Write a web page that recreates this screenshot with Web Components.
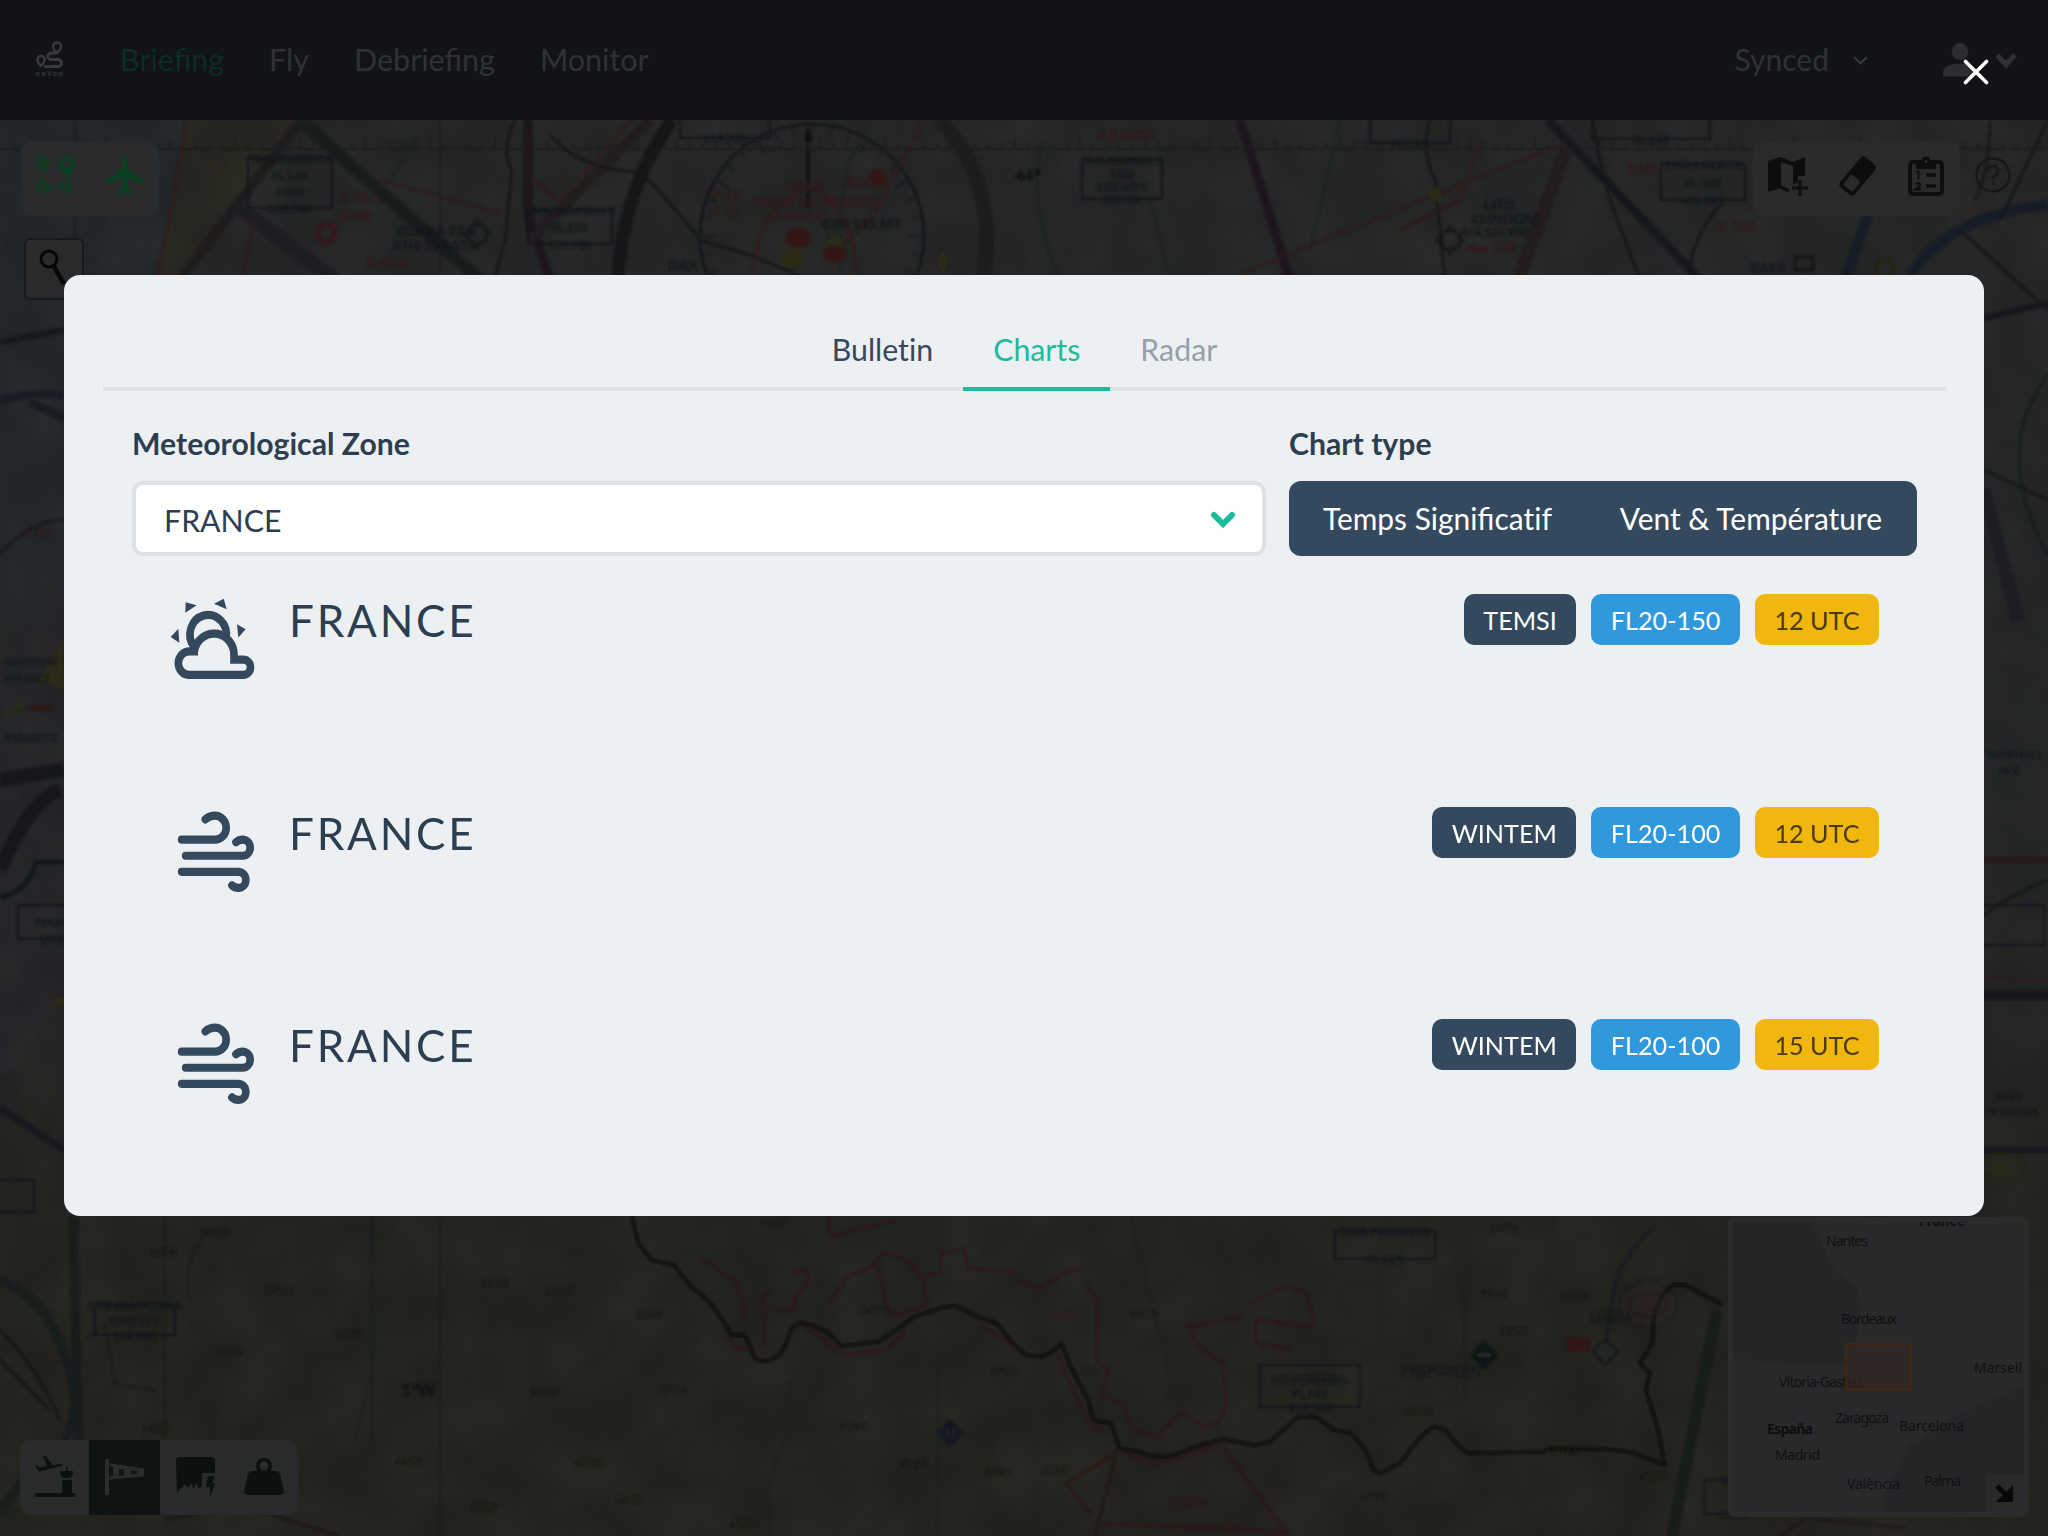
<!DOCTYPE html>
<html lang="en">
<head>
<meta charset="utf-8">
<title>Weather charts</title>
<style>
html,body{margin:0;height:100%;overflow:hidden;background:#111316}
body{font-family:Lato,"Liberation Sans",sans-serif;font-size:30px;color:#34495e}
</style>
</head>
<body>
<flight-app></flight-app>
<script>
const define=(name,html)=>customElements.define(name,class extends HTMLElement{
  constructor(){super();this.attachShadow({mode:'open'}).innerHTML=html;}
});

/* Glyph library: [viewBox, markup] */
const ICONS={
 logo:['0 0 28 28','<g fill="none" stroke="#393a3d" stroke-width="2.4"><path d="M21 1.500a4 4 0 0 0-4 4c0 3 4 6.500 4 6.500s4-3.500 4-6.500a4 4 0 0 0-4-4z"/><path d="M5 15a3.600 3.600 0 0 0-3.600 3.600c0 3 3.600 6.400 3.600 6.400s3.600-3.400 3.600-6.400A3.600 3.600 0 0 0 5 15z"/><path d="M20 12h-5a3 3 0 0 0 0 6.500h7a3.500 3.500 0 0 1 0 7H8" stroke-width="2.800"/></g>'],
 chev:['0 0 24 16','<path d="M3 3l9 9 9-9" fill="none" stroke="currentColor" stroke-width="5"/>'],
 selchev:['0 0 26 18','<path d="M4 4l9 9 9-9" fill="none" stroke="#1abc9c" stroke-width="6" stroke-linecap="round" stroke-linejoin="miter"/>'],
 thin:['0 0 14 9','<path d="M1 1.200l6 6 6-6" fill="none" stroke="#36383b" stroke-width="2"/>'],
 user:['0 0 34 34','<g fill="#2c2d30"><ellipse cx="17" cy="8.500" rx="8.200" ry="8.500"/><path d="M0 33.500v-4c0-6 9-9 17-9s17 3 17 9v4z"/></g>'],
 close:['0 0 26 26','<path d="M2.500 2.500l21 21M23.500 2.500l-21 21" stroke="#fff" stroke-width="3.600" stroke-linecap="round"/>'],
 route:['0 0 38 38','<g fill="#0a3f22"><path fill-rule="evenodd" d="M6 1a5.800 5.800 0 0 0-5.800 5.800C.2 11 6 16 6 16s5.800-5 5.800-9.200A5.800 5.800 0 0 0 6 1zm0 3.300a2.600 2.600 0 1 1 0 5.200 2.600 2.600 0 0 1 0-5.200zM30 0a8 8 0 0 0-8 8c0 6 8 14.500 8 14.500S38 14 38 8a8 8 0 0 0-8-8zm0 4.500a3.300 3.300 0 1 1 0 6.600 3.300 3.300 0 0 1 0-6.600z"/><rect x="4.700" y="18" width="2.600" height="2.800"/></g><g fill="none" stroke="#0a3f22"><circle cx="6" cy="31" r="4.500" stroke-width="3.400"/><circle cx="30" cy="31" r="4.500" stroke-width="3.400"/><path d="M14 31h10" stroke-width="2.600" stroke-dasharray="3 4"/></g>'],
 plane:['0 0 38 40','<path fill="#0a3f22" d="M19 0c-2.200 2-2.800 5-2.800 8v6L0 25.500v3.200l16.200-4.500v8.300L12 36.500v2.800l7-1.500 7 1.500v-2.800l-4.200-4v-8.300L38 28.700v-3.200L21.800 14V8c0-3-.6-6-2.800-8z"/>'],
 search:['0 0 34 42','<circle cx="12" cy="11" r="8" fill="none" stroke="#070707" stroke-width="3"/><path d="M16.500 18L27 36" stroke="#070707" stroke-width="4.500"/>'],
 map:['0 0 42 40','<g fill="#0c0e0e"><path d="M1 5l13-4v31L1 36z"/><path d="M14 1l12 5v4l-12-4z"/><path d="M26 6l12-5v19h-7v6l-5 3z"/></g><path d="M14 31l8 4" fill="none" stroke="#0c0e0e" stroke-width="3.500"/><path d="M33 24v16M25 32h16" stroke="#0c0e0e" stroke-width="3"/>'],
 eraser:['0 0 42 40','<g transform="rotate(40 21 20)"><rect x="12" y="0" width="19" height="39" rx="4" fill="#0c0e0e"/><rect x="15.500" y="22" width="12" height="13.500" rx="2.500" fill="#2a2a2b"/></g>'],
 clip:['0 0 38 42','<rect x="3" y="7" width="32" height="32" rx="3" fill="none" stroke="#0c0e0e" stroke-width="4"/><path d="M9 14V6h5.500a4.500 4.500 0 0 1 9 0H29v8z" fill="#0c0e0e"/><circle cx="19" cy="6.500" r="1.500" fill="#2a2a2b"/><path d="M19 20h10M19 31h10" stroke="#0c0e0e" stroke-width="3.500"/><path d="M9 17.500l2.500-1v8M8.500 29.500q3-2.500 4.500 0 0 2-4.500 5H14" fill="none" stroke="#0c0e0e" stroke-width="2"/>'],
 help:['0 0 38 38','<circle cx="19" cy="19" r="16.500" fill="none" stroke="#171717" stroke-width="2.400"/><path d="M14 15q0-5 5-5t5 4.500-5 6v3M19 26v3" fill="none" stroke="#171717" stroke-width="2.400"/>'],
 tower:['0 0 40 42','<g fill="#0d1010"><path d="M8 0l3 .5 7 9 8-2c2 0 2 2 0 2.800L4 15.500 0 10l2-.5 3 2 7-1.500z"/><path d="M25 15h6v-4h1.500v4H38v3l-2.500 4h-8L25 18z"/><rect x="27" y="24" width="10" height="13"/><rect x="0" y="37" width="40" height="4"/></g>'],
 sock:['0 0 40 38','<path d="M2 1v36" stroke="#2b2c2d" stroke-width="4"/><path fill="#2b2c2d" fill-rule="evenodd" d="M5 5l4 1 30 4.500v8L9 21l-4 1v-3l3-1V9L5 8zm9 6v7l5-1v-5zm12 1.500v4l6-1v-2.500z"/>'],
 radar:['0 0 40 42','<path fill="#0d1010" d="M1 5q0-4 4-4h31q4 0 4 4v12H27v12l-3 4-3-6-2 6-3-6-3 5-3-4-8 9z"/><path fill="#0d1010" d="M33 20h7l-3 7h3l-5 15v-11h-4z"/>'],
 weight:['0 0 40 38','<path fill="#0d1010" d="M9 13h22q4 0 5 3l4 17q0 4-4 4H4q-4 0-4-4l4-17q1-3 5-3z"/><ellipse cx="20" cy="8" rx="6.300" ry="6.500" fill="none" stroke="#0d1010" stroke-width="3.600"/>'],
 cloud:['210 75 255 235','<g fill="none" stroke="#34495e" stroke-width="23"><path d="M282 214A54.500 54.500 0 1 1 378 190"/><path fill="#edf0f3" d="M294 227H268a33 33 0 0 0 0 66H430a21.500 21.500 0 0 0 0-43H402V241A60 60 0 0 0 283 227"/></g><g fill="#34495e"><path d="M257 90l33 8-34 21zM342 94l29-14 9 29zM411 151l26 14-22 23zM212 187l23-23 3 39z"/></g>'],
 wind:['210 670 255 235','<g fill="none" stroke="#34495e" stroke-width="23" stroke-linecap="round"><path d="M245 753H345a33.500 33.500 0 0 0 0-67Q328 686 316 696"/><path d="M257 798H428a22.500 22.500 0 0 0 0-45Q417 753 408 760"/><path d="M245 843H415a22.500 22.500 0 0 1 0 45Q404 888 396 881"/></g>']
};
customElements.define('ui-icon',class extends HTMLElement{
  constructor(){super();this.attachShadow({mode:'open'});}
  connectedCallback(){
    const [vb,m]=ICONS[this.getAttribute('name')];
    this.shadowRoot.innerHTML=`<style>:host{display:block;flex:none;width:${this.getAttribute('w')}px;height:${this.getAttribute('h')}px}svg{display:block;width:100%;height:100%}</style><svg viewBox="${vb}" preserveAspectRatio="none">${m}</svg>`;
  }
});

define('app-header',`<style>
:host{display:flex;align-items:center;height:120px;box-sizing:border-box;padding:0 30px 0 34px;background:#111316;color:#303134;flex:none}
span{position:relative;top:-1px}
.logo{display:flex;flex-direction:column;align-items:center;width:32px;margin-right:54px;padding-bottom:3px}
.logo small{font:bold 7px/7px "Liberation Sans",sans-serif;letter-spacing:1.6px;color:#38393c;margin-top:1px}
nav{display:flex;gap:45px;flex:1;font-size:30.500px}
.on{color:#0b2c28}
.sync{display:flex;align-items:center;gap:24px;margin-right:75px}
.me{display:flex;align-items:center;gap:17px}
</style>
<div class="logo"><ui-icon name="logo" w="28" h="28"></ui-icon><small>naVoo</small></div>
<nav><span class="on">Briefing</span><span>Fly</span><span>Debriefing</span><span>Monitor</span></nav>
<div class="sync"><span>Synced</span><ui-icon name="thin" w="15" h="9"></ui-icon></div>
<div class="me"><ui-icon name="user" w="34" h="34"></ui-icon><ui-icon name="chev" w="24" h="17"></ui-icon></div>`);

define('tool-bar',`<style>
:host{display:flex;border-radius:11px;background:#292a2b;overflow:hidden;height:75px}
</style><slot></slot>`);
define('tool-cell',`<style>
:host{display:flex;align-items:center;justify-content:center;box-sizing:border-box;width:69px;height:75px;padding-bottom:var(--lift,0px)}
:host([active]){background:#101313;width:71px}
</style><slot></slot>`);

/* Aeronautical chart */
const frame=(x,y,w,h,lines,c='#12181b')=>`<rect x="${x}" y="${y}" width="${w}" height="${h}" fill="none" stroke="${c}" stroke-width="2"/>`+lines.map((t,i)=>t?`<text x="${x+w/2}" y="${y+5+i*h/(lines.length-1||1)}" text-anchor="middle" font-size="${Math.min(12,h/(lines.length-1||1)-2.5)}" fill="${c}">${t}</text>`:'').join('');
let ticks='';for(let x=14;x<2048;x+=13)ticks+=`M${x} ${x%5?143:138}V149`;
let rose='';for(let i=0;i<36;i++){const a=i*Math.PI/18,r=i%3?102:95;rose+=`M${812+110*Math.sin(a)} ${236-112*Math.cos(a)}L${812+r*Math.sin(a)} ${236-r*Math.cos(a)}`;}
const spots=[[150,1256,3670],[200,1236,2810],[265,1294,1480],[480,1288,1178],[545,1296,2117],[335,1338,2287],[215,1356,1382],[635,1318,2021],[530,1396,1993],[660,1394,2701],[142,1432,1480],[395,1465,4407],[575,1466,4186],[470,1512,2907],[615,1504,2400],[760,1226,2047],[860,1314,9478],[990,1375,7700],[1130,1318,8907],[840,1430,3041],[900,1468,5057],[985,1476,3841],[1040,1474,6280],[1360,1500,2751],[1490,1232,6473],[1480,1298,7102],[1560,1300,1913],[1500,1335,5502],[1405,1415,2106],[1550,1455,3014],[1640,1480,4090],[1070,1375,7000],[730,1528,4000]].map(([x,y,t])=>`<text x="${x}" y="${y}">${t}</text>`).join('');
define('chart-map',`<style>:host{display:block;position:absolute;inset:0}svg{display:block}</style>
<svg width="2048" height="1416" viewBox="0 120 2048 1416" font-family="Lato,sans-serif" font-size="14" font-weight="bold">
<defs>
<linearGradient id="g" x1="0" y1="0" x2="0" y2="1"><stop offset="0" stop-color="#232424"/><stop offset=".5" stop-color="#222425"/><stop offset=".78" stop-color="#21211e"/><stop offset="1" stop-color="#22211c"/></linearGradient>
<filter id="b" x="0" y="0" width="1" height="1"><feGaussianBlur stdDeviation=".8"/></filter>
<filter id="soft" x="-.5" y="-.5" width="2" height="2"><feGaussianBlur stdDeviation="7"/></filter>
<filter id="n" x="0" y="0" width="1" height="1"><feTurbulence type="fractalNoise" baseFrequency=".018" numOctaves="4" seed="4"/><feColorMatrix values="0 0 0 0 .06  0 0 0 0 .065  0 0 0 0 .05  1.1 0 0 0 -.33"/></filter>
</defs>
<rect y="120" width="2048" height="1416" fill="url(#g)"/>
<path d="M0 120H187L158 280 64 620H0z" fill="#202528"/>
<path d="M0 680L64 550V1000L0 1080z" fill="#222326"/>
<path d="M187 120H300L180 280H158z" fill="#26241e"/>
<rect y="120" width="2048" height="1416" filter="url(#n)" opacity=".3"/>
<g fill="none" filter="url(#b)">
 <path d="${ticks}M0 149H2048" stroke="#1b1c1c" stroke-width="1.500"/>
 <path d="M440 120V280M440 1216V1536M75 120V280M372 1216V1440M165 1216V1441" stroke="#1a1b1a" stroke-width="1.500"/>
 <!-- airspace bands -->
 <g stroke-width="9" stroke="#191a1e">
  <path d="M300 122L180 280" stroke="#1f1a1d"/><path d="M302 122L480 280" stroke-width="12"/><path d="M235 205L335 280" stroke-width="14" stroke="#1b1e23"/>
  <path d="M528 120V215L550 280" stroke="#1b191b"/><path d="M650 120L530 240" stroke="#211a1c"/><path d="M672 120Q622 190 618 280" stroke-width="13" stroke="#151819"/>
  <path d="M940 120Q1000 185 983 280" stroke-width="14" stroke="#1b1b1e"/><path d="M1240 120L1290 280" stroke-width="9" stroke="#1b181b"/>
  <path d="M1566 150L1518 280" stroke="#211a1e" stroke-width="12"/><path d="M1548 120L1700 280" stroke="#13191b" stroke-width="8"/>
  <path d="M1868 215L1845 280M1910 275Q1950 215 2048 205" stroke="#171b25" stroke-width="10"/>
  <path d="M0 342L64 330M1984 318L2048 303" stroke="#17181d" stroke-width="6"/>
  <path d="M0 400Q30 392 64 395M30 402L64 418" stroke="#151a22" stroke-width="7"/>
  <path d="M0 780L64 770M0 870Q30 800 60 790" stroke="#17191f" stroke-width="14"/><path d="M0 898Q30 890 36 862H64" stroke="#101317" stroke-width="4"/>
  <path d="M0 1108L64 1150M1984 1150H2048" stroke="#14171b" stroke-width="6"/>
  <path d="M1984 490L2018 620" stroke="#1a1b24" stroke-width="12"/><path d="M1984 860H2048" stroke="#251319" stroke-width="5"/><path d="M1984 995H2048" stroke="#13151c" stroke-width="9"/>
  <path d="M74 1216Q75 1330 78 1441" stroke="#151a1d" stroke-width="9"/><path d="M0 1281Q60 1300 75 1400Q70 1440 62 1440M0 1510L24 1480" stroke="#141a1d" stroke-width="8"/>
  <path d="M1717 1310L1672 1536" stroke="#161b18" stroke-width="11"/>
 </g>
 <!-- ranges and compass rose -->
 <circle cx="812" cy="236" r="112" stroke="#15191a" stroke-width="2.500"/><path d="${rose}" stroke="#181b1c" stroke-width="1.600"/>
 <path d="M808 127v82" stroke="#161818" stroke-width="3"/><path d="M808 127l4 14h-8z" fill="#111"/>
 <path d="M752 280Q754 210 808 187Q858 210 855 280" stroke="#311a1c" stroke-width="2.500"/>
 <path d="M0 555Q30 520 64 520M2048 375Q1990 450 2048 555" stroke="#171a1b" stroke-width="2"/>
 <!-- red tracks -->
 <g stroke="#301a1c" stroke-width="2.200"><path d="M380 180L500 213M630 120L560 201 530 178M925 120L900 165 870 220 830 255M1380 217L1565 143M1240 274L1380 217M186 120Q176 190 156 280M254 220L242 280M1480 140l-20 60-60 30M1984 978l64 3"/></g>
 <!-- roads and rivers -->
 <g stroke="#141616" stroke-width="2.200"><path d="M515 120Q500 150 512 170L505 240 494 280M550 135Q580 170 640 172Q670 200 700 240L750 255 810 280M1430 120Q1420 150 1435 180L1445 280M1593 120Q1600 170 1612 205L1640 280M1720 205Q1690 240 1690 275M1990 120Q1990 170 1975 200M1960 230L2048 310M2048 120L2000 220M0 1330Q40 1370 60 1420M0 1360L50 1410M1984 470L2048 500M1984 915Q2010 895 2048 880"/></g>
 <g stroke="#1c2021" stroke-width="2"><path d="M418 135L390 180M860 140Q835 180 840 280M1040 150Q1030 210 1060 280M1150 200L1170 280M1340 120L1310 250M1130 1216Q1150 1300 1165 1350T1165 1400M375 1216Q370 1300 372 1370L355 1440M790 1380V1425L766 1490 772 1536M937 1350L938 1536M1465 1285V1400"/></g>
 <!-- frontier -->
 <g transform="translate(700 1200) scale(.4464 .3333)">
 <path vector-effect="non-scaling-stroke" stroke="#0c0d0c" stroke-width="3.200" stroke-linejoin="round" d="M-153 48L-138 130-108 180-58 195-20 260 0 280 30 320 60 380 70 405H100L125 480 150 485 175 468 190 440 205 385 225 368 250 375 285 395 315 438 400 425 440 390 480 350 550 320 575 318 630 355 665 370 700 430 730 465 765 470 790 455 810 430 830 500 870 600 880 660 920 670 940 745 980 755 1010 768H1060L1110 740 1170 718 1240 735 1275 728 1340 650H1380L1420 690 1460 700 1490 750 1510 810 1525 820 1568 790"/>
 <path vector-effect="non-scaling-stroke" stroke="#2d1618" stroke-width="2" stroke-linejoin="round" d="M0 185l30 5 20 35 25 10 20 70M60 410l20 35 30 0M145 440l-5-150 15-15M165 335l40-5 10-40 30-50-10-30-30 10M230 375l60 55 30 35 100-15 40-60M290 310l40-80 60-35 20-40 60 30 30 60 10 70-60 30-30-10-20-140M500 230l40-10 0-60 50-15 10 60 100 10M700 235l60 30 60-50 40-10M865 250l25 60v180l25 10-15 85 50 25 15 80 55 20 60-70 50 40 30-10 20-60-10-120-60-60-15-60M1090 380l130-30M1230 310l80-50 50 20 15 100-130-20 0 70 80 20M630 375l80 70M800 460l50 150 30 75 40 10M940 755l80 35 50-15 90-40M1170 740l150 270M890 970l420 25M930 760l-110 90 60 100M290 50v60l150-50M100 310v50"/></g>
 <path transform="translate(1400 1200) scale(.4133 .3333)" vector-effect="non-scaling-stroke" stroke="#0c0d0c" stroke-width="3.200" stroke-linejoin="round" d="M0 790L50 710 80 680 110 690 135 730 165 760 350 755 360 745 500 747 560 757 640 795 625 690 610 630 595 570 605 520 580 490 610 430 615 340 635 285 660 255 690 255 780 315"/>
 <path d="M1117 1449L1095 1536M165 1520L240 1505 340 1536M1780 1536l26-18 100 10" stroke="#1c1919" stroke-width="2"/>
 <path d="M1655 1227Q1620 1255 1613 1295L1605 1350" stroke="#171b20" stroke-width="3"/>
 <path d="M210 1230Q180 1260 190 1300M85 1340l20-15 10 60 40 5" stroke="#1b1c1b" stroke-width="1.500"/>
</g>
<g filter="url(#b)">
 <g fill="#2b2b14"><circle cx="1435" cy="195" r="7"/><path d="M943 250l6 12-6 11-7-11z"/><ellipse cx="792" cy="259" rx="11" ry="10"/><ellipse cx="835" cy="245" rx="9" ry="10"/><path d="M40 680L60 645H64V690z"/><path d="M0 714L22 700 24 708z"/><circle cx="60" cy="1002" r="5"/></g>
 <ellipse cx="2000" cy="1168" rx="16" ry="8" fill="#2b2b14" filter="url(#soft)"/>
 <g fill="#331517"><ellipse cx="798" cy="238" rx="13" ry="10"/><ellipse cx="835" cy="254" rx="12" ry="8"/><circle cx="878" cy="178" r="9"/><ellipse cx="40" cy="708" rx="13" ry="3"/></g>
 <circle cx="326" cy="233" r="9" fill="none" stroke="#35191b" stroke-width="5"/>
 <g fill="none" stroke="#151719" stroke-width="2.500"><circle cx="477" cy="234" r="10"/><path d="M477 219v5M477 244v5M462 234h5M487 234h5"/><circle cx="1450" cy="240" r="10"/><path d="M1450 225v5M1450 250v5M1435 240h5M1460 240h5"/><circle cx="1884" cy="268" r="9" stroke="#25230f"/><rect x="1795" y="257" width="18" height="13"/></g>
 <path d="M950 1419l13 14-13 14-13-14z" fill="#131922"/><text x="945" y="1438" fill="#24262a">H</text>
 <path d="M1484 1340l14 15-14 15-14-15z" fill="#101615"/><path d="M1477 1355h14" stroke="#2a2a26" stroke-width="3"/>
 <path d="M1605 1340l12 11-12 14-12-14z" fill="#232620" stroke="#15181b" stroke-width="2"/><path d="M1568 1338h22v13h-24z" fill="#311617"/>
 <ellipse cx="1648" cy="1305" rx="24" ry="16" fill="#2b1f1c" opacity=".6" filter="url(#soft)"/>
 <g fill="#331a1c"><text x="785" y="190">LFBM</text><text x="754" y="207" font-size="13.500">MONT DE MARSAN</text><text x="762" y="220" font-size="11">119.700 ATIS</text><text x="846" y="188">R31</text><text x="340" y="202">R 48 A</text><text x="338" y="221">2000</text><text x="366" y="268">R 48 B</text><text x="1098" y="139">4.2 ASFC</text><text x="712" y="200">P 26</text><text x="708" y="216">D 32</text><text x="1628" y="174">R191</text><text x="1715" y="231">▼ 104</text><text x="1467" y="252">◂▬ 130</text><text x="1170" y="1508">R 970</text><text x="24" y="537" font-size="11">R 10B</text><text x="1050" y="1320" font-size="12">R 81</text></g>
 <g fill="#13181c"><text x="1015" y="181" font-size="16" fill="#101112">44°</text><text x="401" y="1396" font-size="17" fill="#101112">1°W</text><text x="396" y="236">BORDA 23.8</text><text x="392" y="250">ATIS 120.575</text><text x="668" y="270">DAX</text><text x="1484" y="210">LFID</text><text x="1472" y="224" font-size="14">CONDOM</text><text x="1460" y="236" font-size="12">A/A 123.500</text><text x="1750" y="273">BASA</text><text x="822" y="229">CTR 111 MT</text><text x="1401" y="1376">PERPIGNAN</text><text x="1590" y="1322">LLIVIA</text><text x="4" y="665" font-size="10">AQUITAINE</text><text x="4" y="682" font-size="10">A/A 122.3</text><text x="4" y="742" font-size="12">BIARRITZ</text><text x="1987" y="758" font-size="9">TOULOUSE 7</text><text x="1998" y="774" font-size="10">AFIS</text><text x="1996" y="1100" font-size="10">LFCG</text><text x="1986" y="1116" font-size="10">ST GIRONS</text></g>
 ${frame(248,158,84,50,['TMA BIARRITZ','FL 145','2500','119.700'])}
 ${frame(528,210,84,34,['TMA MARSAN 3','FL 105','119.700'])}
 ${frame(1082,160,80,39,['TMA MARSAN 5','3000','2000 ASFC','119.700'])}
 ${frame(1661,164,84,36,['TMA CAZAUX','FL 065','+FL 195'])}
 ${frame(1592,108,118,31,['','FL 145'])}${frame(1370,108,80,35,['','FL 115'])}${frame(680,108,90,30,['','119.700'])}
 ${frame(95,1305,80,30,['CTR PAMPLONA','7000 SFC','118.200'])}
 ${frame(1260,1365,100,42,['','SIV PYRENEES','FL 145','118.700'])}
 ${frame(1335,1231,100,28,['TMA PYRENEES','FL 115'])}
 ${frame(18,905,70,34,['','MNPS','1000'])}${frame(-10,1180,44,32,['',''])}
 ${frame(1940,905,105,40,['',''])}
 ${frame(1704,1480,60,34,['TMA','118.1'])}
 <g fill="#181815" font-size="12" font-style="italic" opacity=".8">${spots}</g>
</g>
</svg>`);

define('mini-map',`<style>
:host{display:block;box-sizing:border-box;width:301px;height:300px;border:5px solid #2b2b2c;border-radius:6px;background:#29292b;overflow:hidden}
svg{display:block}</style>
<svg width="291" height="290" viewBox="1733 1221 291 290" font-family="'Noto Sans',sans-serif" font-size="14" fill="#101011">
<path d="M1733 1221h79l22 48 22 15 5 25-10 55-55 0-63-7z" fill="#252528"/>
<path d="M2024 1385l-60 25-55 35-25 50v16h140z" fill="#252528"/>
<text x="1919" y="1225" textLength="46" font-weight="bold">France</text>
<text x="1826" y="1245" textLength="42">Nantes</text>
<text x="1841" y="1323" textLength="56">Bordeaux</text>
<text x="1974" y="1372" textLength="48">Marseil</text>
<text x="1779" y="1386" textLength="84">Vitoria-Gasteiz</text>
<text x="1835" y="1422" textLength="54">Zaragoza</text>
<text x="1767" y="1433" textLength="46" font-weight="bold" fill="#0c0c0d">España</text>
<text x="1899" y="1430" textLength="65">Barcelona</text>
<text x="1775" y="1459" textLength="45">Madrid</text>
<text x="1847" y="1488" textLength="53">València</text>
<text x="1924" y="1485" textLength="37">Palma</text>
<rect x="1846" y="1343" width="65" height="45.500" fill="#322525" fill-opacity=".75" stroke="#45290c" stroke-width="1.800"/>
<rect x="1986" y="1473" width="38" height="38" fill="#2a2a2b"/>
<path d="M1997 1485l10 10" stroke="#080809" stroke-width="5"/><path d="M2013 1484v17h-17z" fill="#080809"/>
</svg>`);

define('map-stage',`<style>
:host{display:block;position:relative;flex:1;overflow:hidden}
.over{position:absolute}
.tl{left:21px;top:21px;--lift:8px}.tr{right:88px;top:21px;--lift:6px}.bl{left:20px;bottom:21px;--lift:1px}.help{right:36px;top:36px}
.mm{right:19px;bottom:19px}
.find{left:24px;top:118px;width:56px;height:58px;border:2px solid #18191a;border-radius:6px;background:#2a2a2b;display:flex;align-items:center;justify-content:center}
</style>
<chart-map></chart-map>
<tool-bar class="over tl"><tool-cell><ui-icon name="route" w="38" h="38"></ui-icon></tool-cell><tool-cell><ui-icon name="plane" w="38" h="40"></ui-icon></tool-cell></tool-bar>
<div class="over find"><ui-icon name="search" w="34" h="42"></ui-icon></div>
<tool-bar class="over tr"><tool-cell><ui-icon name="map" w="42" h="40"></ui-icon></tool-cell><tool-cell><ui-icon name="eraser" w="42" h="40"></ui-icon></tool-cell><tool-cell><ui-icon name="clip" w="38" h="42"></ui-icon></tool-cell></tool-bar>
<ui-icon class="over help" name="help" w="38" h="38"></ui-icon>
<tool-bar class="over bl"><tool-cell><ui-icon name="tower" w="40" h="42"></ui-icon></tool-cell><tool-cell active><ui-icon name="sock" w="40" h="38"></ui-icon></tool-cell><tool-cell><ui-icon name="radar" w="40" h="42"></ui-icon></tool-cell><tool-cell><ui-icon name="weight" w="40" h="38"></ui-icon></tool-cell></tool-bar>
<mini-map class="over mm"></mini-map>`);

define('tab-item',`<style>
:host{display:block;padding:0 30px;height:60px;line-height:44px;border-bottom:4px solid transparent;margin-bottom:-4px;color:#34495e;font-size:30.300px;font-variant-ligatures:no-common-ligatures}
:host([active]){color:#1abc9c;border-color:#25b698}
:host([disabled]){color:#95a0aa}
</style><slot></slot>`);
define('tab-strip',`<style>
:host{display:flex;justify-content:center;height:60px;border-bottom:4px solid #dfe1e5}
</style><slot></slot>`);
define('form-field',`<style>
:host{display:flex;flex-direction:column}
b{line-height:36px;margin-bottom:20px;margin-top:-1px;color:#2d3e50;font-size:30.200px}
</style><b><slot name="label"></slot></b><slot></slot>`);
define('select-box',`<style>
:host{display:flex;align-items:center;justify-content:space-between;box-sizing:border-box;height:75px;border:4px solid #dee1e4;border-radius:11px;background:#fff;padding:2px 26px 0 28px;color:#2c3e50;font-size:30.300px}
</style><slot></slot><ui-icon name="selchev" w="26" h="18"></ui-icon>`);
define('button-pair',`<style>
:host{display:flex;align-items:center;justify-content:space-between;box-sizing:border-box;height:75px;border-radius:12px;background:#34495e;color:#fff;padding:0 35px 1px 34px;font-size:29.900px}
</style><slot></slot>`);
define('tag-badge',`<style>
:host{display:block;height:51px;line-height:52px;padding:0 19.500px;border-radius:10px;font-size:25.200px;color:#fff;background:#34495e}
:host([kind=level]){background:#3098dc}
:host([kind=time]){background:#f0b70f;color:#4b3a0b}
</style><slot></slot>`);
define('chart-row',`<style>
:host{display:flex;align-items:flex-start;height:212.500px;color:#2c3e50}
.name{font-size:44px;line-height:52px;letter-spacing:2.800px;flex:1;margin-left:34px}
.tags{display:flex;gap:15px}
.ic{padding-top:3px}
</style><div class="ic"><slot name="icon"></slot></div><div class="name"><slot></slot></div><div class="tags"><slot name="tag"></slot></div>`);
define('modal-card',`<style>
:host{display:block;box-sizing:border-box;width:1920px;height:941px;border-radius:16px;background:#edf0f3;padding:52px 38px 0 39px}
.form{display:flex;gap:23px;padding:35px 29px 0 29px}
.form form-field:first-child{width:1134px}.form form-field:last-child{width:628px}
.rows{display:flex;flex-direction:column;padding:38px 67px 0 67px}
.nl{font-variant-ligatures:no-common-ligatures}
</style>
<tab-strip><tab-item>Bulletin</tab-item><tab-item active>Charts</tab-item><tab-item disabled>Radar</tab-item></tab-strip>
<div class="form">
<form-field><span slot="label">Meteorological Zone</span><select-box><span>FRANCE</span></select-box></form-field>
<form-field><span slot="label">Chart type</span><button-pair><span>Temps Significa<span class="nl">ti</span>f</span><span>Vent &amp; Température</span></button-pair></form-field>
</div>
<div class="rows">
<chart-row><ui-icon slot="icon" name="cloud" w="85" h="84"></ui-icon>FRANCE<tag-badge slot="tag">TEMSI</tag-badge><tag-badge slot="tag" kind="level">FL20-150</tag-badge><tag-badge slot="tag" kind="time">12 UTC</tag-badge></chart-row>
<chart-row><ui-icon slot="icon" name="wind" w="85" h="84"></ui-icon>FRANCE<tag-badge slot="tag">WINTEM</tag-badge><tag-badge slot="tag" kind="level">FL20-100</tag-badge><tag-badge slot="tag" kind="time">12 UTC</tag-badge></chart-row>
<chart-row><ui-icon slot="icon" name="wind" w="85" h="84"></ui-icon>FRANCE<tag-badge slot="tag">WINTEM</tag-badge><tag-badge slot="tag" kind="level">FL20-100</tag-badge><tag-badge slot="tag" kind="time">15 UTC</tag-badge></chart-row>
</div>`);
define('flight-app',`<style>
:host{display:flex;flex-direction:column;width:2048px;height:1536px;position:relative}
.dialog{position:absolute;inset:0;display:flex;justify-content:center;align-items:flex-start;padding-top:275px}
.x{position:absolute;right:59px;top:59px}
</style>
<app-header></app-header><map-stage></map-stage>
<div class="dialog"><modal-card></modal-card><ui-icon class="x" name="close" w="26" h="26"></ui-icon></div>`);
</script>
</body>
</html>
